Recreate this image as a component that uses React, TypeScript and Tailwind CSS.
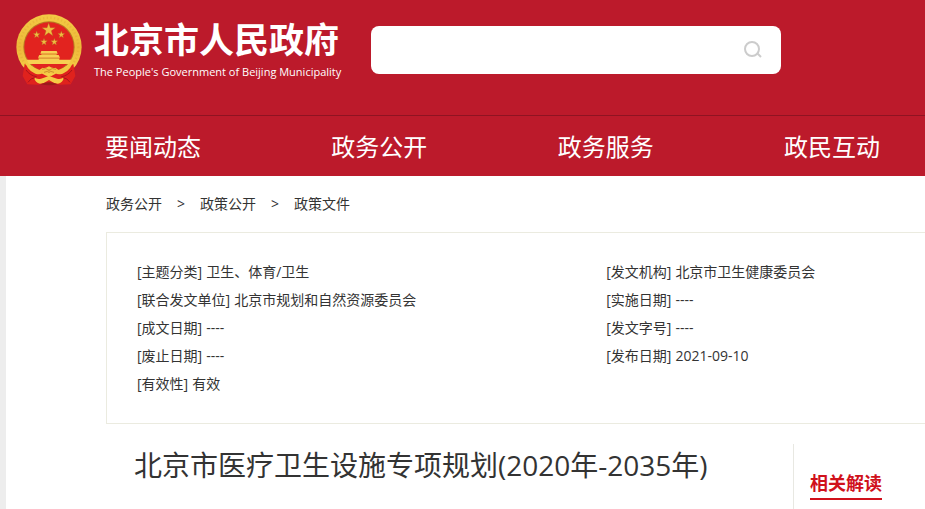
import React from "react";

const navItems = ["要闻动态", "政务公开", "政务服务", "政民互动"];
const crumbs = ["政务公开", "政策公开", "政策文件"];

const metaLeft = [
  ["主题分类", "卫生、体育/卫生"],
  ["联合发文单位", "北京市规划和自然资源委员会"],
  ["成文日期", "----"],
  ["废止日期", "----"],
  ["有效性", "有效"],
];

const metaRight = [
  ["发文机构", "北京市卫生健康委员会"],
  ["实施日期", "----"],
  ["发文字号", "----"],
  ["发布日期", "2021-09-10"],
];

function starPoints(cx: number, cy: number, r: number) {
  return Array.from({ length: 10 }, (_, i) => {
    const radius = i % 2 === 0 ? r : r * 0.4;
    const angle = (Math.PI / 5) * i - Math.PI / 2;
    return `${(cx + radius * Math.cos(angle)).toFixed(1)},${(cy + radius * Math.sin(angle)).toFixed(1)}`;
  }).join(" ");
}

function Emblem() {
  return (
    <svg viewBox="0 0 198 216" className="h-[72px] w-[66px] shrink-0" aria-hidden="true">
      <defs>
        <linearGradient id="gold" x1="0" y1="0" x2="0" y2="1">
          <stop offset="0" stopColor="#f3c944" />
          <stop offset="0.5" stopColor="#edb93a" />
          <stop offset="1" stopColor="#f8d34a" />
        </linearGradient>
      </defs>
      <circle cx="99" cy="99" r="98" fill="url(#gold)" />
      <circle cx="99" cy="99" r="88" fill="none" stroke="#dc9d2d" strokeWidth="7" strokeDasharray="4 7" opacity="0.35" />
      <circle cx="99" cy="99" r="77" fill="#b97a22" />
      <circle cx="99" cy="99" r="74" fill="#e2231f" />
      <g fill="#f0bd42" stroke="#a9651b" strokeWidth="1">
        <polygon points={starPoints(98, 48, 21)} />
        <polygon points={starPoints(62, 62, 11)} />
        <polygon points={starPoints(136, 62, 11)} />
        <polygon points={starPoints(84, 84, 11)} />
        <polygon points={starPoints(115, 84, 11)} />
      </g>
      <g fill="#f7cf52">
        <path d="M76 111H122L125 119H73Z" />
        <path d="M76 119H122V125H76Z" fill="#e5a137" />
        <path d="M70 123H128L132 131H66Z" />
        <path d="M68 131H130V147H68Z" />
        <path d="M32 137H166L161 150H37Z" />
      </g>
      <path d="M68 133H130" stroke="#c97f25" strokeWidth="2" />
      <path d="M26 150L46 162L99 190L152 162L172 150L178 186L164 211L132 212L99 204L66 212L34 211L20 186Z" fill="#e0221d" />
      <path d="M28 138Q46 160 70 168L80 161Q88 164 99 157Q110 164 118 161L128 168Q152 160 170 138Q168 168 140 179Q124 184 118 176Q108 183 99 174Q90 183 80 176Q74 184 58 179Q30 168 28 138Z" fill="#f3c743" />
      <path d="M54 190Q64 197 75 194L99 186L123 194Q134 197 144 190Q140 208 126 209Q112 208 99 198Q86 208 72 209Q58 208 54 190Z" fill="#f5cb46" />
      <path d="M78 166Q89 161 99 168Q109 161 120 166M84 175Q99 166 114 175" fill="none" stroke="#bd7423" strokeWidth="2" />
      <path d="M30 168Q42 185 62 188M36 205Q44 192 57 191M168 168Q156 185 136 188M162 205Q154 192 141 191" fill="none" stroke="#a8151a" strokeWidth="3" />
      <path d="M74 211Q99 199 124 211Q99 217 74 211Z" fill="#9d1a1c" />
    </svg>
  );
}

function SearchIcon() {
  return (
    <svg viewBox="0 0 20 20" className="size-5" fill="none" stroke="#cccccc" strokeWidth="2" aria-hidden="true">
      <circle cx="9" cy="9" r="7" />
      <path d="M14 13L18 17" />
    </svg>
  );
}

function MetaList({ items }: { items: string[][] }) {
  return (
    <dl>
      {items.map(([label, value]) => (
        <div key={label} className="flex gap-1 leading-7 whitespace-nowrap">
          <dt>[{label}]</dt>
          <dd>{value}</dd>
        </div>
      ))}
    </dl>
  );
}

export default function App() {
  return (
    <div className="flex min-h-screen flex-col overflow-x-hidden bg-white font-['Open_Sans','Noto_Sans_CJK_SC',sans-serif] text-sm text-[#333333]">
      <header className="bg-[#bc1a2b] text-white">
        <div className="flex h-[115px] items-start pl-4">
          <a href="#" className="flex w-[355px] shrink-0 pt-[14px]">
            <Emblem />
            <span className="flex flex-col pl-3 whitespace-nowrap">
              <span className="text-[35px] leading-[52px] font-bold">北京市人民政府</span>
              <span className="text-[11px] leading-3">The People's Government of Beijing Municipality</span>
            </span>
          </a>
          <form className="mt-[26px] flex h-12 w-[410px] items-center rounded-lg bg-white pr-[18px]" onSubmit={(e) => e.preventDefault()}>
            <input type="search" aria-label="搜索" className="h-full min-w-0 flex-1 rounded-lg px-4 text-base text-[#333333] outline-none" />
            <button type="submit" aria-label="搜索" className="cursor-pointer">
              <SearchIcon />
            </button>
          </form>
        </div>
        <nav className="flex h-[61px] items-center justify-between border-t border-[#8f1322] pt-0.5 pr-[45px] pl-[105px] text-2xl">
          {navItems.map((item) => (
            <a key={item} href="#">{item}</a>
          ))}
        </nav>
      </header>

      <main className="flex-1 border-l-[6px] border-[#ededed] pl-[100px]">
        <nav className="flex h-14 items-center gap-[15px]">
          {crumbs.map((crumb, i) => (
            <React.Fragment key={crumb}>
              {i > 0 && <span>&gt;</span>}
              <a href="#">{crumb}</a>
            </React.Fragment>
          ))}
        </nav>

        <section className="grid h-48 grid-cols-[3fr_2fr] border-y border-l border-[#ebebe0] pt-[25px] pr-1.5 pl-[30px]">
          <MetaList items={metaLeft} />
          <MetaList items={metaRight} />
        </section>

        <div className="flex pt-5">
          <article className="min-w-0 flex-1 pl-7">
            <h1 className="text-[28px] leading-[42px] whitespace-nowrap">北京市医疗卫生设施专项规划(2020年-2035年)</h1>
          </article>
          <aside className="h-[65px] w-[132px] shrink-0 border-l border-[#e8e8e2] pt-6 pl-4">
            <h2 className="inline-block border-b-2 border-[#d0111b] text-lg leading-[30px] font-bold text-[#d0111b]">相关解读</h2>
          </aside>
        </div>
      </main>
    </div>
  );
}
